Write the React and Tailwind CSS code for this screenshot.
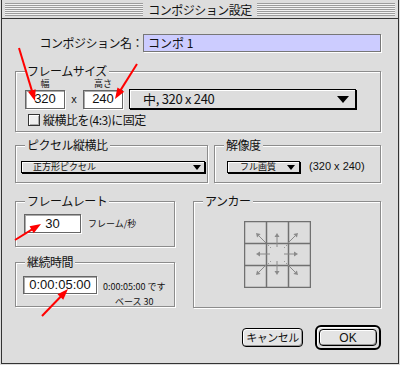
import React from 'react';

const jp = "font-['Noto_Sans_CJK_JP',sans-serif]";

const redArrows = [
    { from: [19, 48], to: [35, 101] },
    { from: [137, 64], to: [115, 99] },
    { from: [15, 240], to: [41, 224] },
    { from: [42, 316], to: [68, 289] }
];

const RedArrow = ({ from, to }) => {
    const dx = to[0] - from[0];
    const dy = to[1] - from[1];
    const len = Math.hypot(dx, dy);
    const ux = dx / len;
    const uy = dy / len;
    const bx = to[0] - ux * 11;
    const by = to[1] - uy * 11;
    const px = -uy * 4;
    const py = ux * 4;
    return (
        <g>
            <line x1={from[0]} y1={from[1]} x2={bx + ux * 2} y2={by + uy * 2} stroke="#ff0000" strokeWidth="2" />
            <polygon points={`${to[0]},${to[1]} ${bx + px},${by + py} ${bx - px},${by - py}`} fill="#ff0000" />
        </g>
    );
};

const Group = ({ label, className, children }) => (
    <div className={`relative border border-[#8c8c8c] shadow-[1px_1px_0_#fff,inset_1px_1px_0_#fff] ${className}`}>
        <span className={`absolute -top-[7px] left-[9px] bg-[#dddddd] px-[2px] text-[12px] leading-[12px] tracking-[-0.5px] text-[#111] ${jp}`}>
            {label}
        </span>
        {children}
    </div>
);

const Field = ({ className, children }) => (
    <div className={`flex items-center justify-center border border-[#666] bg-white shadow-[inset_1px_1px_0_#aaa,1px_1px_0_#fff] font-['Liberation_Sans',sans-serif] text-[#111] ${className}`}>
        {children}
    </div>
);

const DownArrow = ({ w = 11, h = 6 }) => (
    <svg width={w} height={h} viewBox={`0 0 ${w} ${h}`}>
        <polygon points={`0,0 ${w},0 ${w / 2},${h}`} fill="#000" />
    </svg>
);

const Popup = ({ className, textClass, text, arrow }) => (
    <div className={`flex items-center justify-between border border-black bg-[#dddddd] shadow-[1px_1px_0_#000,inset_1px_1px_0_#fff] ${className}`}>
        <span className={textClass}>{text}</span>
        {arrow}
    </div>
);

const AnchorGrid = () => {
    const arrows = [
        [22, 22, 12, 12], [33, 26, 33, 12], [44, 22, 54, 12],
        [26, 33, 12, 33], [40, 33, 54, 33],
        [22, 44, 12, 54], [33, 40, 33, 54], [44, 44, 54, 54]
    ];
    return (
        <svg width="67" height="67" viewBox="0 0 67 67">
            {[0.5, 22.5, 44.5, 66.5].map((p) => (
                <g key={p}>
                    <line x1={p} y1="0" x2={p} y2="67" stroke="#707070" strokeWidth="1.5" />
                    <line x1="0" y1={p} x2="67" y2={p} stroke="#707070" strokeWidth="1.5" />
                </g>
            ))}
            {arrows.map(([x1, y1, x2, y2], i) => {
                const dx = x2 - x1;
                const dy = y2 - y1;
                const l = Math.hypot(dx, dy);
                const ux = dx / l;
                const uy = dy / l;
                const bx = x2 - ux * 4;
                const by = y2 - uy * 4;
                return (
                    <g key={i}>
                        <line x1={x1} y1={y1} x2={bx} y2={by} stroke="#8a8a8a" strokeWidth="1" />
                        <polygon points={`${x2},${y2} ${bx - uy * 2.5},${by + ux * 2.5} ${bx + uy * 2.5},${by - ux * 2.5}`} fill="#8a8a8a" />
                    </g>
                );
            })}
            {[[24, 24], [42, 24], [24, 42], [42, 42], [26, 26], [40, 26], [26, 40], [40, 40]].map(([x, y], i) => (
                <rect key={i} x={x} y={y} width="1" height="1" fill="#9a9a9a" />
            ))}
        </svg>
    );
};

const stripes = "h-[13px] flex-1 bg-[image:repeating-linear-gradient(to_bottom,#9c9c9c_0px,#9c9c9c_1px,#f2f2f2_1px,#f2f2f2_2px)]";

export default function App() {
    return (
        <div className="relative h-[365px] w-[400px] overflow-hidden bg-[#dddddd]">
            <div className="ml-[1px] h-[364px] w-[398px] border-x border-b border-[#333] bg-[#dddddd]">
                {/* title bar */}
                <div className="flex h-[19px] items-center border-b border-[#333] px-[3px] pt-[1px]">
                    <div className={stripes} />
                    <span className={`px-[5px] text-[12px] leading-[14px] tracking-[-0.5px] text-[#111] ${jp}`}>コンポジション設定</span>
                    <div className={stripes} />
                </div>

                <div className="pl-[13px]">
                    <div className="w-[366px]">
                        {/* name */}
                        <div className="mt-[15px] flex h-[18px] items-center">
                            <span className={`w-[128px] text-right text-[12px] tracking-[-0.5px] text-[#111] ${jp}`}>コンポジション名：</span>
                            <div className={`flex h-[18px] flex-1 items-center border border-[#777] bg-[#ccccff] pl-[4px] text-[12px] text-[#111] shadow-[1px_1px_0_#fff] ${jp}`}>
                                コンポ 1
                            </div>
                        </div>

                        {/* frame size */}
                        <Group label="フレームサイズ" className="mt-[19px] h-[61px] pl-[9px] pt-[7px]">
                            <div className={`flex h-[10px] items-center text-[9px] leading-[10px] text-[#111] ${jp}`}>
                                <span className="w-[40px] text-center">幅</span>
                                <span className="w-[18px]" />
                                <span className="w-[40px] text-center">高さ</span>
                            </div>
                            <div className="flex items-center">
                                <Field className="h-[19px] w-[40px] text-[13px]">320</Field>
                                <span className="w-[18px] text-center font-['Liberation_Sans',sans-serif] text-[11px] text-[#111]">x</span>
                                <Field className="h-[19px] w-[40px] text-[13px]">240</Field>
                                <Popup
                                    className="ml-[6px] h-[20px] w-[227px] pl-[13px] pr-[6px]"
                                    textClass={`text-[13px] tracking-[-0.3px] text-[#111] ${jp}`}
                                    text="中, 320 x 240"
                                    arrow={<DownArrow w={12} h={7} />}
                                />
                            </div>
                            <div className="mt-[4px] flex items-center pl-[3px]">
                                <span className="h-[12px] w-[12px] border border-[#333] bg-[#eeeeee] shadow-[inset_1px_1px_0_#fff,inset_-1px_-1px_0_#aaa]" />
                                <span className={`ml-[3px] text-[12px] leading-[14px] tracking-[-0.5px] text-[#111] ${jp}`}>縦横比を(4:3)に固定</span>
                            </div>
                        </Group>

                        {/* pixel aspect + resolution */}
                        <div className="mt-[13px] flex gap-[6px]">
                            <Group label="ピクセル縦横比" className="h-[38px] w-[193px] pl-[5px] pt-[15px]">
                                <Popup
                                    className="h-[12px] w-[184px] pl-[11px] pr-[3px]"
                                    textClass={`text-[9px] leading-[10px] text-[#111] ${jp}`}
                                    text="正方形ピクセル"
                                    arrow={<DownArrow w={8} h={5} />}
                                />
                            </Group>
                            <Group label="解像度" className="flex h-[38px] flex-1 items-start pl-[12px] pt-[15px]">
                                <Popup
                                    className="h-[12px] w-[73px] pl-[12px] pr-[4px]"
                                    textClass={`text-[9px] leading-[10px] text-[#111] ${jp}`}
                                    text="フル画質"
                                    arrow={<DownArrow w={8} h={5} />}
                                />
                                <span className="ml-[9px] -mt-[2px] font-['Liberation_Sans',sans-serif] text-[11px] leading-[14px] text-[#111]">(320 x 240)</span>
                            </Group>
                        </div>

                        {/* lower area */}
                        <div className="mt-[18px] flex gap-[18px]">
                            <div className="w-[160px]">
                                <Group label="フレームレート" className="flex h-[46px] items-start pl-[8px] pt-[12px]">
                                    <Field className="h-[19px] w-[57px] text-[13px]">30</Field>
                                    <span className={`ml-[7px] mt-[4px] text-[9px] leading-[11px] text-[#111] ${jp}`}>フレーム/秒</span>
                                </Group>
                                <Group label="継続時間" className="mt-[15px] flex h-[45px] items-start pl-[7px] pt-[13px]">
                                    <Field className="h-[18px] w-[74px] text-[13px]">0:00:05:00</Field>
                                    <div className={`ml-[6px] mt-[3px] flex flex-col items-center text-[9px] leading-[15px] text-[#111] ${jp}`}>
                                        <span>0:00:05:00 です</span>
                                        <span>ベース 30</span>
                                    </div>
                                </Group>
                            </div>
                            <Group label="アンカー" className="h-[107px] flex-1 pl-[50px] pt-[19px]">
                                <AnchorGrid />
                            </Group>
                        </div>

                        {/* buttons */}
                        <div className="mt-[17px] flex h-[25px] items-center justify-end gap-[12px]">
                            <button className={`flex h-[19px] w-[61px] items-center justify-center rounded-[4px] border border-black bg-[#e4e4e4] text-[11px] tracking-[-0.5px] text-[#111] shadow-[inset_1px_1px_0_#fff,inset_-1px_-1px_0_#999] ${jp}`}>
                                キャンセル
                            </button>
                            <div className="flex h-[25px] w-[66px] items-center justify-center rounded-[6px] border-[2px] border-black bg-[#dddddd] shadow-[inset_1px_1px_0_#fff]">
                                <button className="flex h-[17px] w-[58px] items-center justify-center rounded-[4px] border border-black bg-[#e4e4e4] font-['Liberation_Sans',sans-serif] text-[12px] text-[#111] shadow-[inset_1px_1px_0_#fff,inset_-1px_-1px_0_#999]">
                                    OK
                                </button>
                            </div>
                        </div>
                    </div>
                </div>
            </div>

            <svg className="pointer-events-none absolute left-0 top-0" width="400" height="365">
                {redArrows.map((a, i) => (
                    <RedArrow key={i} from={a.from} to={a.to} />
                ))}
            </svg>
        </div>
    );
}
